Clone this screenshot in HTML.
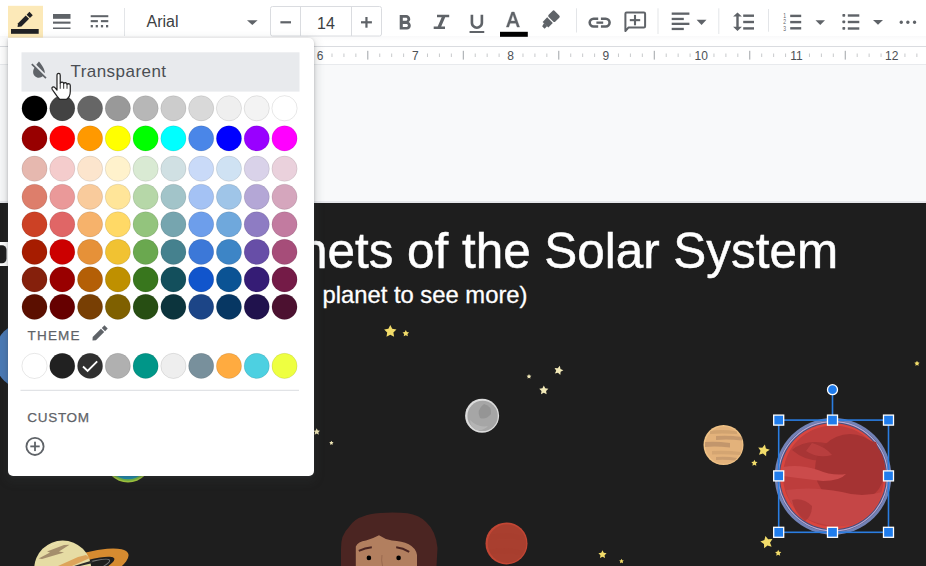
<!DOCTYPE html>
<html><head><meta charset="utf-8">
<style>
*{margin:0;padding:0;box-sizing:border-box}
html,body{width:926px;height:566px;overflow:hidden;background:#f8f9fa;font-family:"Liberation Sans",sans-serif}
.abs{position:absolute}
#toolbar{position:absolute;left:0;top:0;width:926px;height:46px;background:#fff}
#ruler{position:absolute;left:0;top:46px;width:926px;height:19px;background:#fff;border-top:1px solid #dadce0;border-bottom:1px solid #e8eaed}
.rn{position:absolute;top:3px;width:40px;text-align:center;font-size:12px;color:#4d5156;line-height:14px}
#slide{position:absolute;left:0;top:203px;width:926px;height:363px;background:#1e1e1e}
.title{position:absolute;left:228.6px;top:223px;font-size:49.4px;color:#fff;-webkit-text-stroke:0.5px #fff;white-space:nowrap;line-height:56px}
.sub{position:absolute;font-size:23.8px;color:#fff;-webkit-text-stroke:0.3px #fff;white-space:nowrap;line-height:26px}
#dd{position:absolute;left:7.5px;top:38px;width:306.5px;height:437.8px;background:#fff;border-radius:0 5px 5px 5px;box-shadow:0 1px 3px rgba(60,64,67,.3),0 4px 8px 3px rgba(60,64,67,.15)}
.lbl{position:absolute;font-size:13.5px;font-weight:normal;color:#5f6368;letter-spacing:1.2px;-webkit-text-stroke:0.25px #5f6368}
</style></head><body>

<!-- toolbar -->
<div id="toolbar"></div>
<div class="abs" style="left:0;top:36px;width:926px;height:5px;background:linear-gradient(#f9f9fa,#fff)"></div>
<svg class="abs" style="left:0;top:0" width="926" height="46" viewBox="0 0 926 46">
  <rect x="8" y="5.8" width="35" height="31.8" fill="#fce9b8"/>
  <!-- pencil -->
  <g transform="translate(17.6 27) rotate(-45)">
    <path d="M0 0 L3 -2.35 L13.9 -2.35 L13.9 2.35 L3 2.35 Z" fill="#202124"/>
    <rect x="15.1" y="-2.35" width="4" height="4.7" fill="#202124"/>
  </g>
  <rect x="11" y="29" width="27.7" height="4.8" fill="#202124"/>
  <!-- border weight -->
  <rect x="53" y="14" width="17.5" height="4.8" fill="#5f6368"/>
  <rect x="53" y="21.6" width="17.5" height="2.1" fill="#5f6368"/>
  <rect x="53" y="27.5" width="17.5" height="1.5" fill="#5f6368"/>
  <!-- border dash -->
  <rect x="90.7" y="15.2" width="17.6" height="2" fill="#5f6368"/>
  <rect x="90.7" y="20.1" width="7.2" height="2.1" fill="#5f6368"/>
  <rect x="100.9" y="20.1" width="7.4" height="2.1" fill="#5f6368"/>
  <rect x="90.7" y="25" width="2.2" height="2.4" fill="#5f6368"/>
  <rect x="95.7" y="25" width="2.2" height="2.4" fill="#5f6368"/>
  <rect x="100.9" y="25" width="2.2" height="2.4" fill="#5f6368"/>
  <rect x="106" y="25" width="2.2" height="2.4" fill="#5f6368"/>
  <!-- separators -->
  <rect x="124" y="8" width="1" height="28" fill="#e3e5e8"/>
  <!-- font dropdown arrow -->
  <path d="M247 20.3 L257.6 20.3 L252.3 25 Z" fill="#5f6368"/>
  <!-- font size box -->
  <rect x="270.5" y="6.5" width="111" height="29.5" rx="2" fill="none" stroke="#dadce0"/>
  <rect x="300" y="7" width="1" height="29" fill="#dadce0"/>
  <rect x="351" y="7" width="1" height="29" fill="#dadce0"/>
  <rect x="280.4" y="21.2" width="10.6" height="2.2" fill="#5f6368"/>
  <rect x="361" y="21.2" width="10.9" height="2.2" fill="#5f6368"/>
  <rect x="365.35" y="17" width="2.2" height="10.7" fill="#5f6368"/>
  <!-- B I U -->
  <path transform="translate(392.5 11) scale(1.03)" fill="#5f6368" d="M15.6 10.79c.97-.67 1.65-1.77 1.65-2.79 0-2.26-1.75-4-4-4H7v14h7.04c2.09 0 3.71-1.7 3.71-3.79 0-1.52-.86-2.82-2.15-3.42zM10 6.5h3c.83 0 1.5.67 1.5 1.5s-.67 1.5-1.5 1.5h-3v-3zm3.5 9H10v-3h3.5c.83 0 1.5.67 1.5 1.5s-.67 1.5-1.5 1.5z"/>
  <path d="M437 14.7 H449.2 V17.2 H445.2 L441.2 26.5 H445 V29 H433.7 V26.5 H437.7 L441.7 17.2 H437 Z" fill="#5f6368"/>
  <path transform="translate(464.3 11.6) scale(1.05 1.02)" fill="#5f6368" d="M12 17c3.31 0 6-2.69 6-6V3h-2.5v8c0 1.93-1.57 3.5-3.5 3.5S8.5 12.93 8.5 11V3H6v8c0 3.31 2.69 6 6 6zm-7 2v2h14v-2H5z"/>
  <!-- text color A -->
  <path transform="translate(500.7 8.76) scale(1.02 1.08)" fill="#5f6368" stroke="#5f6368" stroke-width="0.35" d="M5.49 17h2.42l1.27-3.58h5.65L16.09 17h2.42L13.25 3h-2.5L5.49 17zm4.42-5.61l2.03-5.79h.12l2.03 5.79H9.91z"/>
  <rect x="500" y="31.8" width="27.8" height="5" fill="#000"/>
  <!-- highlighter -->
  <g transform="translate(543 27.2) rotate(-45)" fill="#5f6368">
    <path d="M0 -1.2 L3.8 -2.2 L3.8 2.2 L0 2.2 Z"/>
    <rect x="3.5" y="-4" width="6.4" height="8"/>
    <rect x="11.2" y="-4.8" width="8.6" height="9.6" rx="1.6"/>
  </g>
  <rect x="576" y="8.3" width="1" height="24.2" fill="#e3e5e8"/>
  <!-- link -->
  <g fill="none" stroke="#5f6368" stroke-width="2.6">
    <path d="M598.2 18.7 H593.6 A3.9 3.9 0 0 0 593.6 26.5 H598.2"/>
    <path d="M600.9 18.7 H605.7 A3.9 3.9 0 0 1 605.7 26.5 H600.9"/>
  </g>
  <rect x="596.4" y="21.5" width="6.8" height="2.3" fill="#5f6368"/>
  <!-- comment -->
  <path d="M625.4 31 V13.8 Q625.4 12.6 626.6 12.6 H643.9 Q645.1 12.6 645.1 13.8 V26.2 Q645.1 27.4 643.9 27.4 H628.6 Z" fill="none" stroke="#5f6368" stroke-width="2" stroke-linejoin="round"/>
  <rect x="629.8" y="19.1" width="10.4" height="2.1" fill="#5f6368"/>
  <rect x="633.95" y="14.9" width="2.1" height="10.4" fill="#5f6368"/>
  <rect x="657.5" y="8.3" width="1" height="25.7" fill="#e3e5e8"/>
  <!-- align -->
  <rect x="671.7" y="12.5" width="17.7" height="2.3" fill="#5f6368"/>
  <rect x="671.7" y="17.8" width="12.1" height="2.3" fill="#5f6368"/>
  <rect x="671.7" y="22.7" width="17.7" height="2.3" fill="#5f6368"/>
  <rect x="671.7" y="27.8" width="12.1" height="2.3" fill="#5f6368"/>
  <path d="M696.6 19.7 L706.5 19.7 L701.55 25 Z" fill="#5f6368"/>
  <rect x="718.3" y="8.3" width="1" height="25.7" fill="#e3e5e8"/>
  <!-- line spacing -->
  <path d="M737.5 12.4 L741.9 16.6 H738.7 V26.8 H741.9 L737.5 31 L733.1 26.8 H736.3 V16.6 H733.1 Z" fill="#5f6368"/>
  <rect x="743.2" y="14.5" width="10.8" height="2.4" fill="#5f6368"/>
  <rect x="743.2" y="20.8" width="10.8" height="2.4" fill="#5f6368"/>
  <rect x="743.2" y="27.2" width="10.8" height="2.4" fill="#5f6368"/>
  <rect x="768" y="9" width="1" height="22.7" fill="#e3e5e8"/>
  <!-- numbered list -->
  <g transform="translate(783.2 0) scale(0.72 1)" font-family="Liberation Sans" font-size="7" fill="#5f6368">
    <text x="0" y="18.2">1</text>
    <text x="0" y="24.4">2</text>
    <text x="0" y="30.6">3</text>
  </g>
  <rect x="790.2" y="14.7" width="11" height="2.4" fill="#5f6368"/>
  <rect x="790.2" y="20.9" width="11" height="2.4" fill="#5f6368"/>
  <rect x="790.2" y="27.1" width="11" height="2.4" fill="#5f6368"/>
  <path d="M815.5 20.2 L825 20.2 L820.25 25 Z" fill="#5f6368"/>
  <!-- bulleted list -->
  <rect x="842.4" y="14" width="2.8" height="2.8" rx="0.7" fill="#5f6368"/>
  <rect x="842.4" y="20.5" width="2.8" height="2.8" rx="0.7" fill="#5f6368"/>
  <rect x="842.4" y="27" width="2.8" height="2.8" rx="0.7" fill="#5f6368"/>
  <rect x="847.8" y="14.3" width="11.5" height="2.4" fill="#5f6368"/>
  <rect x="847.8" y="20.8" width="11.5" height="2.4" fill="#5f6368"/>
  <rect x="847.8" y="27.3" width="11.5" height="2.4" fill="#5f6368"/>
  <path d="M873 20 L883 20 L878 24.8 Z" fill="#5f6368"/>
  <!-- more -->
  <rect x="899.6" y="20.5" width="3.3" height="3.4" rx="1.6" fill="#5f6368"/>
  <rect x="906.2" y="20.5" width="3.3" height="3.4" rx="1.6" fill="#5f6368"/>
  <rect x="912.9" y="20.5" width="3.3" height="3.4" rx="1.6" fill="#5f6368"/>
</svg>
<div class="abs" style="left:146.5px;top:12.5px;font-size:16px;color:#3c4043;line-height:18px">Arial</div>
<div class="abs" style="left:301px;top:15px;width:50px;text-align:center;font-size:16px;color:#3c4043;line-height:18px">14</div>

<!-- ruler -->
<div id="ruler"></div>
<svg class="abs" style="left:0;top:0" width="926" height="70">
<rect x="-241.45" y="53.5" width="1" height="3.5" fill="#c8cacc"/>
<rect x="-229.51" y="53.5" width="1" height="3.5" fill="#c8cacc"/>
<rect x="-217.58" y="53.5" width="1" height="3.5" fill="#c8cacc"/>
<rect x="-205.64" y="50.8" width="1" height="8.8" fill="#a0a4a8"/>
<rect x="-193.70" y="53.5" width="1" height="3.5" fill="#c8cacc"/>
<rect x="-181.77" y="53.5" width="1" height="3.5" fill="#c8cacc"/>
<rect x="-169.83" y="53.5" width="1" height="3.5" fill="#c8cacc"/>
<rect x="-145.96" y="53.5" width="1" height="3.5" fill="#c8cacc"/>
<rect x="-134.02" y="53.5" width="1" height="3.5" fill="#c8cacc"/>
<rect x="-122.09" y="53.5" width="1" height="3.5" fill="#c8cacc"/>
<rect x="-110.15" y="50.8" width="1" height="8.8" fill="#a0a4a8"/>
<rect x="-98.21" y="53.5" width="1" height="3.5" fill="#c8cacc"/>
<rect x="-86.28" y="53.5" width="1" height="3.5" fill="#c8cacc"/>
<rect x="-74.34" y="53.5" width="1" height="3.5" fill="#c8cacc"/>
<rect x="-50.47" y="53.5" width="1" height="3.5" fill="#c8cacc"/>
<rect x="-38.53" y="53.5" width="1" height="3.5" fill="#c8cacc"/>
<rect x="-26.60" y="53.5" width="1" height="3.5" fill="#c8cacc"/>
<rect x="-14.66" y="50.8" width="1" height="8.8" fill="#a0a4a8"/>
<rect x="-2.72" y="53.5" width="1" height="3.5" fill="#c8cacc"/>
<rect x="9.21" y="53.5" width="1" height="3.5" fill="#c8cacc"/>
<rect x="21.15" y="53.5" width="1" height="3.5" fill="#c8cacc"/>
<rect x="45.02" y="53.5" width="1" height="3.5" fill="#c8cacc"/>
<rect x="56.96" y="53.5" width="1" height="3.5" fill="#c8cacc"/>
<rect x="68.89" y="53.5" width="1" height="3.5" fill="#c8cacc"/>
<rect x="80.83" y="50.8" width="1" height="8.8" fill="#a0a4a8"/>
<rect x="92.77" y="53.5" width="1" height="3.5" fill="#c8cacc"/>
<rect x="104.70" y="53.5" width="1" height="3.5" fill="#c8cacc"/>
<rect x="116.64" y="53.5" width="1" height="3.5" fill="#c8cacc"/>
<rect x="140.51" y="53.5" width="1" height="3.5" fill="#c8cacc"/>
<rect x="152.45" y="53.5" width="1" height="3.5" fill="#c8cacc"/>
<rect x="164.38" y="53.5" width="1" height="3.5" fill="#c8cacc"/>
<rect x="176.32" y="50.8" width="1" height="8.8" fill="#a0a4a8"/>
<rect x="188.26" y="53.5" width="1" height="3.5" fill="#c8cacc"/>
<rect x="200.19" y="53.5" width="1" height="3.5" fill="#c8cacc"/>
<rect x="212.13" y="53.5" width="1" height="3.5" fill="#c8cacc"/>
<rect x="236.00" y="53.5" width="1" height="3.5" fill="#c8cacc"/>
<rect x="247.94" y="53.5" width="1" height="3.5" fill="#c8cacc"/>
<rect x="259.87" y="53.5" width="1" height="3.5" fill="#c8cacc"/>
<rect x="271.81" y="50.8" width="1" height="8.8" fill="#a0a4a8"/>
<rect x="283.75" y="53.5" width="1" height="3.5" fill="#c8cacc"/>
<rect x="295.68" y="53.5" width="1" height="3.5" fill="#c8cacc"/>
<rect x="307.62" y="53.5" width="1" height="3.5" fill="#c8cacc"/>
<rect x="331.49" y="53.5" width="1" height="3.5" fill="#c8cacc"/>
<rect x="343.43" y="53.5" width="1" height="3.5" fill="#c8cacc"/>
<rect x="355.36" y="53.5" width="1" height="3.5" fill="#c8cacc"/>
<rect x="367.30" y="50.8" width="1" height="8.8" fill="#a0a4a8"/>
<rect x="379.24" y="53.5" width="1" height="3.5" fill="#c8cacc"/>
<rect x="391.17" y="53.5" width="1" height="3.5" fill="#c8cacc"/>
<rect x="403.11" y="53.5" width="1" height="3.5" fill="#c8cacc"/>
<rect x="426.98" y="53.5" width="1" height="3.5" fill="#c8cacc"/>
<rect x="438.92" y="53.5" width="1" height="3.5" fill="#c8cacc"/>
<rect x="450.85" y="53.5" width="1" height="3.5" fill="#c8cacc"/>
<rect x="462.79" y="50.8" width="1" height="8.8" fill="#a0a4a8"/>
<rect x="474.73" y="53.5" width="1" height="3.5" fill="#c8cacc"/>
<rect x="486.66" y="53.5" width="1" height="3.5" fill="#c8cacc"/>
<rect x="498.60" y="53.5" width="1" height="3.5" fill="#c8cacc"/>
<rect x="522.47" y="53.5" width="1" height="3.5" fill="#c8cacc"/>
<rect x="534.41" y="53.5" width="1" height="3.5" fill="#c8cacc"/>
<rect x="546.34" y="53.5" width="1" height="3.5" fill="#c8cacc"/>
<rect x="558.28" y="50.8" width="1" height="8.8" fill="#a0a4a8"/>
<rect x="570.22" y="53.5" width="1" height="3.5" fill="#c8cacc"/>
<rect x="582.15" y="53.5" width="1" height="3.5" fill="#c8cacc"/>
<rect x="594.09" y="53.5" width="1" height="3.5" fill="#c8cacc"/>
<rect x="617.96" y="53.5" width="1" height="3.5" fill="#c8cacc"/>
<rect x="629.90" y="53.5" width="1" height="3.5" fill="#c8cacc"/>
<rect x="641.83" y="53.5" width="1" height="3.5" fill="#c8cacc"/>
<rect x="653.77" y="50.8" width="1" height="8.8" fill="#a0a4a8"/>
<rect x="665.71" y="53.5" width="1" height="3.5" fill="#c8cacc"/>
<rect x="677.64" y="53.5" width="1" height="3.5" fill="#c8cacc"/>
<rect x="689.58" y="53.5" width="1" height="3.5" fill="#c8cacc"/>
<rect x="713.45" y="53.5" width="1" height="3.5" fill="#c8cacc"/>
<rect x="725.39" y="53.5" width="1" height="3.5" fill="#c8cacc"/>
<rect x="737.32" y="53.5" width="1" height="3.5" fill="#c8cacc"/>
<rect x="749.26" y="50.8" width="1" height="8.8" fill="#a0a4a8"/>
<rect x="761.20" y="53.5" width="1" height="3.5" fill="#c8cacc"/>
<rect x="773.13" y="53.5" width="1" height="3.5" fill="#c8cacc"/>
<rect x="785.07" y="53.5" width="1" height="3.5" fill="#c8cacc"/>
<rect x="808.94" y="53.5" width="1" height="3.5" fill="#c8cacc"/>
<rect x="820.88" y="53.5" width="1" height="3.5" fill="#c8cacc"/>
<rect x="832.81" y="53.5" width="1" height="3.5" fill="#c8cacc"/>
<rect x="844.75" y="50.8" width="1" height="8.8" fill="#a0a4a8"/>
<rect x="856.69" y="53.5" width="1" height="3.5" fill="#c8cacc"/>
<rect x="868.62" y="53.5" width="1" height="3.5" fill="#c8cacc"/>
<rect x="880.56" y="53.5" width="1" height="3.5" fill="#c8cacc"/>
<rect x="904.43" y="53.5" width="1" height="3.5" fill="#c8cacc"/>
<rect x="916.37" y="53.5" width="1" height="3.5" fill="#c8cacc"/>
<rect x="928.30" y="53.5" width="1" height="3.5" fill="#c8cacc"/>
<rect x="940.24" y="50.8" width="1" height="8.8" fill="#a0a4a8"/>
<rect x="952.18" y="53.5" width="1" height="3.5" fill="#c8cacc"/>
<rect x="964.11" y="53.5" width="1" height="3.5" fill="#c8cacc"/>
<rect x="976.05" y="53.5" width="1" height="3.5" fill="#c8cacc"/>
<rect x="999.92" y="53.5" width="1" height="3.5" fill="#c8cacc"/>
<rect x="1011.86" y="53.5" width="1" height="3.5" fill="#c8cacc"/>
<rect x="1023.79" y="53.5" width="1" height="3.5" fill="#c8cacc"/>
<rect x="1035.73" y="50.8" width="1" height="8.8" fill="#a0a4a8"/>
<rect x="1047.67" y="53.5" width="1" height="3.5" fill="#c8cacc"/>
<rect x="1059.60" y="53.5" width="1" height="3.5" fill="#c8cacc"/>
<rect x="1071.54" y="53.5" width="1" height="3.5" fill="#c8cacc"/>
</svg>
<div class="abs" style="left:0;top:46px;width:926px;height:18px">
<div class="rn" style="left:300.0px">6</div>
<div class="rn" style="left:395.3px">7</div>
<div class="rn" style="left:490.6px">8</div>
<div class="rn" style="left:585.9px">9</div>
<div class="rn" style="left:681.2px">10</div>
<div class="rn" style="left:776.5px">11</div>
<div class="rn" style="left:871.8px">12</div>
</div>

<!-- slide -->
<div class="abs" style="left:0;top:201px;width:926px;height:2px;background:#e6e7eb"></div>
<div id="slide"></div>
<div class="title">Planets of the Solar System</div>
<div class="sub" style="left:236.5px;top:281.6px"><span style="color:transparent;-webkit-text-stroke:0">(Click a </span>planet to see more)</div>

<svg class="abs" style="left:0;top:203px" width="926" height="363" viewBox="0 203 926 363">
  <!-- white arc on left -->
  <rect x="-6" y="242" width="14" height="24" fill="#fff"/>
  <rect x="-8" y="245.3" width="14.5" height="18" rx="4.5" fill="#1e1e1e"/>
  <!-- blue planet left -->
  <circle cx="28.9" cy="356" r="35" fill="#4a7ab6"/>
  <!-- earth partial -->
  <circle cx="128" cy="458.7" r="23.8" fill="#a6cc3c"/>
  <circle cx="128" cy="458.7" r="22.3" fill="#74b844"/>
  <circle cx="128" cy="458.7" r="20.6" fill="#1d8fb5"/>
  <circle cx="128" cy="457" r="17.5" fill="#26a0c4"/>
  <!-- saturn -->
  <g>
    <ellipse cx="70" cy="575" rx="62" ry="17" transform="rotate(-20 70 575)" fill="#d68b30"/>
    <ellipse cx="72" cy="574" rx="45" ry="8.5" transform="rotate(-20 72 574)" fill="#1e1e1e"/>
    <ellipse cx="72" cy="574" rx="40" ry="6" transform="rotate(-20 72 574)" fill="none" stroke="#777" stroke-width="1"/>
    <circle cx="62.7" cy="569" r="28.5" fill="#e6dca4"/>
    <path d="M42 552 Q52 543 62.7 541 Q48 546 42 552 Z" fill="#f2ecc6"/>
    <path d="M38.7 558.5 L50 552.5 L47 551.5 L64 545 L69.5 544.8 L59 551.5 L64 552.5 L42 559 Z" fill="#a48e6c"/>
    <path d="M58 566 L78 557 L86 555 L90 558 L72 566 Z" fill="#dda45a"/>
    <path d="M74 566 L92 560.5 L93 563 L80 566 Z" fill="#2a2a2a"/>
  </g>
  <!-- stars -->
  <g fill="#f2dc6a">
    <path d="M0 -1 L0.294 -0.405 L0.951 -0.309 L0.476 0.155 L0.588 0.809 L0 0.5 L-0.588 0.809 L-0.476 0.155 L-0.951 -0.309 L-0.294 -0.405 Z" transform="translate(390.3 331.5) scale(6.5)"/>
    <path d="M0 -1 L0.294 -0.405 L0.951 -0.309 L0.476 0.155 L0.588 0.809 L0 0.5 L-0.588 0.809 L-0.476 0.155 L-0.951 -0.309 L-0.294 -0.405 Z" transform="translate(405.8 333.5) scale(3.5)"/>
    <path d="M0 -1 L0.294 -0.405 L0.951 -0.309 L0.476 0.155 L0.588 0.809 L0 0.5 L-0.588 0.809 L-0.476 0.155 L-0.951 -0.309 L-0.294 -0.405 Z" transform="translate(558.6 370.5) rotate(15) scale(4.8)" fill="#f2e9b8"/>
    <path d="M0 -1 L0.294 -0.405 L0.951 -0.309 L0.476 0.155 L0.588 0.809 L0 0.5 L-0.588 0.809 L-0.476 0.155 L-0.951 -0.309 L-0.294 -0.405 Z" transform="translate(529 376.5) scale(2.5)" fill="#f2e9b8"/>
    <path d="M0 -1 L0.294 -0.405 L0.951 -0.309 L0.476 0.155 L0.588 0.809 L0 0.5 L-0.588 0.809 L-0.476 0.155 L-0.951 -0.309 L-0.294 -0.405 Z" transform="translate(543.8 390.3) scale(4.8)" fill="#f2e9b8"/>
    <path d="M0 -1 L0.294 -0.405 L0.951 -0.309 L0.476 0.155 L0.588 0.809 L0 0.5 L-0.588 0.809 L-0.476 0.155 L-0.951 -0.309 L-0.294 -0.405 Z" transform="translate(316.7 431.8) scale(3.5)" fill="#f2e9b8"/>
    <path d="M0 -1 L0.294 -0.405 L0.951 -0.309 L0.476 0.155 L0.588 0.809 L0 0.5 L-0.588 0.809 L-0.476 0.155 L-0.951 -0.309 L-0.294 -0.405 Z" transform="translate(331.4 443) scale(2.3)" fill="#f2e9b8"/>
    <path d="M0 -1 L0.294 -0.405 L0.951 -0.309 L0.476 0.155 L0.588 0.809 L0 0.5 L-0.588 0.809 L-0.476 0.155 L-0.951 -0.309 L-0.294 -0.405 Z" transform="translate(917 363.5) scale(2.8)"/>
    <path d="M0 -1 L0.294 -0.405 L0.951 -0.309 L0.476 0.155 L0.588 0.809 L0 0.5 L-0.588 0.809 L-0.476 0.155 L-0.951 -0.309 L-0.294 -0.405 Z" transform="translate(763.6 450.5) rotate(12) scale(6.2)"/>
    <path d="M0 -1 L0.294 -0.405 L0.951 -0.309 L0.476 0.155 L0.588 0.809 L0 0.5 L-0.588 0.809 L-0.476 0.155 L-0.951 -0.309 L-0.294 -0.405 Z" transform="translate(754.4 463) scale(3.3)"/>
    <path d="M0 -1 L0.294 -0.405 L0.951 -0.309 L0.476 0.155 L0.588 0.809 L0 0.5 L-0.588 0.809 L-0.476 0.155 L-0.951 -0.309 L-0.294 -0.405 Z" transform="translate(766.8 542.3) rotate(-12) scale(6.5)"/>
    <path d="M0 -1 L0.294 -0.405 L0.951 -0.309 L0.476 0.155 L0.588 0.809 L0 0.5 L-0.588 0.809 L-0.476 0.155 L-0.951 -0.309 L-0.294 -0.405 Z" transform="translate(778.2 553) scale(3.3)"/>
    <path d="M0 -1 L0.294 -0.405 L0.951 -0.309 L0.476 0.155 L0.588 0.809 L0 0.5 L-0.588 0.809 L-0.476 0.155 L-0.951 -0.309 L-0.294 -0.405 Z" transform="translate(602.5 554.5) scale(4.3)"/>
    <path d="M0 -1 L0.294 -0.405 L0.951 -0.309 L0.476 0.155 L0.588 0.809 L0 0.5 L-0.588 0.809 L-0.476 0.155 L-0.951 -0.309 L-0.294 -0.405 Z" transform="translate(621.5 561.2) scale(2.5)"/>
  </g>
  <!-- moon -->
  <circle cx="482.1" cy="415.7" r="17" fill="#dcdcdc"/>
  <circle cx="482.6" cy="415.9" r="15.2" fill="#a6a6a6"/>
  <path d="M484 404 Q492 406 491 414 Q486 420 480 418 Q476 410 484 404 Z" fill="#959595"/>
  <path d="M470 420 Q478 428 488 426 Q484 431 476 430 Q470 426 470 420 Z" fill="#b4b4b4"/>
  <!-- mars small -->
  <circle cx="506.5" cy="543.4" r="21" fill="#c24634"/>
  <circle cx="507" cy="543.6" r="19.3" fill="#a93f2f"/>
  <path d="M490 535 Q505 531 524 536 L523 540 Q505 537 490 540 Z" fill="#a83d2e" opacity="0.6"/>
  <path d="M489 550 Q505 546 523 551 L521 555 Q505 552 491 554 Z" fill="#a83d2e" opacity="0.6"/>
  <!-- venus -->
  <circle cx="723.5" cy="445" r="20" fill="#efc286"/>
  <circle cx="723.8" cy="445.2" r="18.6" fill="#e3b27b"/>
  <path d="M710 431 Q722 429 737 431.5 L737 434 Q722 433 710 434 Z" fill="#c99c6c" opacity="0.7"/>
  <path d="M716 436 Q728 435 742 437 L742 440.5 Q728 439 716 440 Z" fill="#b98f68" opacity="0.7"/>
  <path d="M705 442 Q716 441 730 443 L730 447.5 Q716 446 705 447 Z" fill="#b48a66" opacity="0.7"/>
  <path d="M712 451 Q726 450 741 452 L740 455 Q726 454 712 454.5 Z" fill="#c99c6c" opacity="0.6"/>
  <path d="M716 457 Q727 456 737 458 L735 460.5 Q726 459.5 716 460 Z" fill="#b98f68" opacity="0.6"/>
  <!-- face -->
  <path d="M341 566 L341 549 Q340.5 535 349 527 Q354 519 363 516.5 Q369 513.5 380 513 Q395 512 407.5 513.3 Q419 515 426 522 Q436 531 437.5 548 L436.5 566 Z" fill="#4b2522"/>
  <path d="M355.8 566 V546.5 Q358 541.5 366 540.6 Q373 538.5 379 535.3 Q385 539.5 392 540.6 Q402 541.5 408.7 544.2 Q416 548 417 555 V566 Z" fill="#b27f5f"/>
  <path d="M358.8 550.9 Q365 548 371.8 547.3" fill="none" stroke="#4b2522" stroke-width="2"/>
  <path d="M396.2 547.3 Q403 548 409.2 551.9" fill="none" stroke="#4b2522" stroke-width="2"/>
  <path d="M382 555 Q381 560 382.5 566" fill="none" stroke="#93634a" stroke-width="0.8"/>
  <circle cx="368.9" cy="557.9" r="2.3" fill="#000"/>
  <circle cx="398.6" cy="557.9" r="2.3" fill="#000"/>
  <!-- selected mars -->
  <circle cx="833" cy="476.3" r="58.3" fill="#7282b6"/>
  <circle cx="833" cy="476.3" r="55.6" fill="#46507e"/>
  <circle cx="833" cy="476.3" r="54.6" fill="none" stroke="#b7a9d3" stroke-width="1.2"/>
  <circle cx="833" cy="476.3" r="53" fill="#d9463f"/>
  <circle cx="833.5" cy="476" r="50.5" fill="#bd3d3c"/>
  <path d="M792 450 Q806 438 830 444 Q852 436 876 442 L881 458 Q852 456 832 460 Q808 464 792 450 Z" fill="#a83535"/>
  <circle cx="850" cy="469" r="35" fill="#a53333"/>
  <path d="M783 467 Q800 464 818 470 Q832 476 846 474 Q840 481 823 481 Q805 479 783 476 Z" fill="#cb4b4b"/>
  <path d="M786 490 Q812 486 842 492 Q862 498 882 492 Q877 514 852 525 Q822 529 802 516 Q790 506 786 490 Z" fill="#c54646"/>
  <path d="M792 500 Q803 497 812 506 Q812 516 805 521 Q794 512 792 500 Z" fill="#a83535" opacity="0.75"/>
  <path d="M812 443 Q826 447 832 455 Q818 459 806 451 Z" fill="#c04343" opacity="0.7"/>
  <!-- selection -->
  <g fill="none" stroke="#2a7de1" stroke-width="1.6">
    <rect x="778.7" y="420.1" width="109.8" height="112.2"/>
    <line x1="832.5" y1="395" x2="832.5" y2="420"/>
  </g>
  <g fill="#1f7cec" stroke="#fff" stroke-width="1.3">
    <circle cx="832.5" cy="389.7" r="5"/>
    <rect x="773.7" y="415.1" width="10" height="10"/>
    <rect x="827.5" y="415.1" width="10" height="10"/>
    <rect x="883.5" y="415.1" width="10" height="10"/>
    <rect x="773.7" y="470.9" width="10" height="10"/>
    <rect x="883.5" y="470.9" width="10" height="10"/>
    <rect x="773.7" y="527.3" width="10" height="10"/>
    <rect x="827.5" y="527.3" width="10" height="10"/>
    <rect x="883.5" y="527.3" width="10" height="10"/>
  </g>
</svg>

<!-- dropdown -->
<div id="dd"></div>
<svg class="abs" style="left:0;top:0" width="320" height="480" viewBox="0 0 320 480">
  <rect x="21.5" y="52.3" width="278" height="39.3" fill="#e8eaed"/>
  <!-- format_color_reset icon -->
  <g transform="translate(27.3 58.3) scale(0.97)" fill="#5f6368">
    <path d="M18 14c0-4-6-10.8-6-10.8s-1.33 1.51-2.73 3.52l8.59 8.59c.09-.42.14-.86.14-1.31zm-.88 3.12L12.5 12.5 5.27 5.27 4 6.55l3.32 3.32C6.55 11.32 6 12.79 6 14c0 3.31 2.69 6 6 6 1.52 0 2.9-.57 3.96-1.5l2.63 2.63 1.27-1.27-2.74-2.74z"/>
  </g>
  <text x="70.5" y="77.4" font-family="Liberation Sans" font-size="17" letter-spacing="0.45" fill="#4a4e53">Transparent</text>
  <circle cx="34.50" cy="108.30" r="12.6" fill="#000000" stroke="rgba(0,0,0,0.12)" stroke-width="0.8"/>
<circle cx="62.28" cy="108.30" r="12.6" fill="#434343" stroke="rgba(0,0,0,0.12)" stroke-width="0.8"/>
<circle cx="90.06" cy="108.30" r="12.6" fill="#666666" stroke="rgba(0,0,0,0.12)" stroke-width="0.8"/>
<circle cx="117.84" cy="108.30" r="12.6" fill="#999999" stroke="rgba(0,0,0,0.12)" stroke-width="0.8"/>
<circle cx="145.62" cy="108.30" r="12.6" fill="#b7b7b7" stroke="rgba(0,0,0,0.12)" stroke-width="0.8"/>
<circle cx="173.40" cy="108.30" r="12.6" fill="#cccccc" stroke="rgba(0,0,0,0.12)" stroke-width="0.8"/>
<circle cx="201.18" cy="108.30" r="12.6" fill="#d9d9d9" stroke="rgba(0,0,0,0.12)" stroke-width="0.8"/>
<circle cx="228.96" cy="108.30" r="12.6" fill="#efefef" stroke="rgba(0,0,0,0.12)" stroke-width="0.8"/>
<circle cx="256.74" cy="108.30" r="12.6" fill="#f3f3f3" stroke="rgba(0,0,0,0.12)" stroke-width="0.8"/>
<circle cx="284.52" cy="108.30" r="12.6" fill="#ffffff" stroke="rgba(0,0,0,0.12)" stroke-width="0.8"/>
<circle cx="34.50" cy="138.40" r="12.6" fill="#980000" stroke="rgba(0,0,0,0.12)" stroke-width="0.8"/>
<circle cx="62.28" cy="138.40" r="12.6" fill="#ff0000" stroke="rgba(0,0,0,0.12)" stroke-width="0.8"/>
<circle cx="90.06" cy="138.40" r="12.6" fill="#ff9900" stroke="rgba(0,0,0,0.12)" stroke-width="0.8"/>
<circle cx="117.84" cy="138.40" r="12.6" fill="#ffff00" stroke="rgba(0,0,0,0.12)" stroke-width="0.8"/>
<circle cx="145.62" cy="138.40" r="12.6" fill="#00ff00" stroke="rgba(0,0,0,0.12)" stroke-width="0.8"/>
<circle cx="173.40" cy="138.40" r="12.6" fill="#00ffff" stroke="rgba(0,0,0,0.12)" stroke-width="0.8"/>
<circle cx="201.18" cy="138.40" r="12.6" fill="#4a86e8" stroke="rgba(0,0,0,0.12)" stroke-width="0.8"/>
<circle cx="228.96" cy="138.40" r="12.6" fill="#0000ff" stroke="rgba(0,0,0,0.12)" stroke-width="0.8"/>
<circle cx="256.74" cy="138.40" r="12.6" fill="#9900ff" stroke="rgba(0,0,0,0.12)" stroke-width="0.8"/>
<circle cx="284.52" cy="138.40" r="12.6" fill="#ff00ff" stroke="rgba(0,0,0,0.12)" stroke-width="0.8"/>
<circle cx="34.50" cy="168.70" r="12.6" fill="#e6b8af" stroke="rgba(0,0,0,0.12)" stroke-width="0.8"/>
<circle cx="62.28" cy="168.70" r="12.6" fill="#f4cccc" stroke="rgba(0,0,0,0.12)" stroke-width="0.8"/>
<circle cx="90.06" cy="168.70" r="12.6" fill="#fce5cd" stroke="rgba(0,0,0,0.12)" stroke-width="0.8"/>
<circle cx="117.84" cy="168.70" r="12.6" fill="#fff2cc" stroke="rgba(0,0,0,0.12)" stroke-width="0.8"/>
<circle cx="145.62" cy="168.70" r="12.6" fill="#d9ead3" stroke="rgba(0,0,0,0.12)" stroke-width="0.8"/>
<circle cx="173.40" cy="168.70" r="12.6" fill="#d0e0e3" stroke="rgba(0,0,0,0.12)" stroke-width="0.8"/>
<circle cx="201.18" cy="168.70" r="12.6" fill="#c9daf8" stroke="rgba(0,0,0,0.12)" stroke-width="0.8"/>
<circle cx="228.96" cy="168.70" r="12.6" fill="#cfe2f3" stroke="rgba(0,0,0,0.12)" stroke-width="0.8"/>
<circle cx="256.74" cy="168.70" r="12.6" fill="#d9d2e9" stroke="rgba(0,0,0,0.12)" stroke-width="0.8"/>
<circle cx="284.52" cy="168.70" r="12.6" fill="#ead1dc" stroke="rgba(0,0,0,0.12)" stroke-width="0.8"/>
<circle cx="34.50" cy="196.80" r="12.6" fill="#dd7e6b" stroke="rgba(0,0,0,0.12)" stroke-width="0.8"/>
<circle cx="62.28" cy="196.80" r="12.6" fill="#ea9999" stroke="rgba(0,0,0,0.12)" stroke-width="0.8"/>
<circle cx="90.06" cy="196.80" r="12.6" fill="#f9cb9c" stroke="rgba(0,0,0,0.12)" stroke-width="0.8"/>
<circle cx="117.84" cy="196.80" r="12.6" fill="#ffe599" stroke="rgba(0,0,0,0.12)" stroke-width="0.8"/>
<circle cx="145.62" cy="196.80" r="12.6" fill="#b6d7a8" stroke="rgba(0,0,0,0.12)" stroke-width="0.8"/>
<circle cx="173.40" cy="196.80" r="12.6" fill="#a2c4c9" stroke="rgba(0,0,0,0.12)" stroke-width="0.8"/>
<circle cx="201.18" cy="196.80" r="12.6" fill="#a4c2f4" stroke="rgba(0,0,0,0.12)" stroke-width="0.8"/>
<circle cx="228.96" cy="196.80" r="12.6" fill="#9fc5e8" stroke="rgba(0,0,0,0.12)" stroke-width="0.8"/>
<circle cx="256.74" cy="196.80" r="12.6" fill="#b4a7d6" stroke="rgba(0,0,0,0.12)" stroke-width="0.8"/>
<circle cx="284.52" cy="196.80" r="12.6" fill="#d5a6bd" stroke="rgba(0,0,0,0.12)" stroke-width="0.8"/>
<circle cx="34.50" cy="224.30" r="12.6" fill="#cc4125" stroke="rgba(0,0,0,0.12)" stroke-width="0.8"/>
<circle cx="62.28" cy="224.30" r="12.6" fill="#e06666" stroke="rgba(0,0,0,0.12)" stroke-width="0.8"/>
<circle cx="90.06" cy="224.30" r="12.6" fill="#f6b26b" stroke="rgba(0,0,0,0.12)" stroke-width="0.8"/>
<circle cx="117.84" cy="224.30" r="12.6" fill="#ffd966" stroke="rgba(0,0,0,0.12)" stroke-width="0.8"/>
<circle cx="145.62" cy="224.30" r="12.6" fill="#93c47d" stroke="rgba(0,0,0,0.12)" stroke-width="0.8"/>
<circle cx="173.40" cy="224.30" r="12.6" fill="#76a5af" stroke="rgba(0,0,0,0.12)" stroke-width="0.8"/>
<circle cx="201.18" cy="224.30" r="12.6" fill="#6d9eeb" stroke="rgba(0,0,0,0.12)" stroke-width="0.8"/>
<circle cx="228.96" cy="224.30" r="12.6" fill="#6fa8dc" stroke="rgba(0,0,0,0.12)" stroke-width="0.8"/>
<circle cx="256.74" cy="224.30" r="12.6" fill="#8e7cc3" stroke="rgba(0,0,0,0.12)" stroke-width="0.8"/>
<circle cx="284.52" cy="224.30" r="12.6" fill="#c27ba0" stroke="rgba(0,0,0,0.12)" stroke-width="0.8"/>
<circle cx="34.50" cy="251.90" r="12.6" fill="#a61c00" stroke="rgba(0,0,0,0.12)" stroke-width="0.8"/>
<circle cx="62.28" cy="251.90" r="12.6" fill="#cc0000" stroke="rgba(0,0,0,0.12)" stroke-width="0.8"/>
<circle cx="90.06" cy="251.90" r="12.6" fill="#e69138" stroke="rgba(0,0,0,0.12)" stroke-width="0.8"/>
<circle cx="117.84" cy="251.90" r="12.6" fill="#f1c232" stroke="rgba(0,0,0,0.12)" stroke-width="0.8"/>
<circle cx="145.62" cy="251.90" r="12.6" fill="#6aa84f" stroke="rgba(0,0,0,0.12)" stroke-width="0.8"/>
<circle cx="173.40" cy="251.90" r="12.6" fill="#45818e" stroke="rgba(0,0,0,0.12)" stroke-width="0.8"/>
<circle cx="201.18" cy="251.90" r="12.6" fill="#3c78d8" stroke="rgba(0,0,0,0.12)" stroke-width="0.8"/>
<circle cx="228.96" cy="251.90" r="12.6" fill="#3d85c6" stroke="rgba(0,0,0,0.12)" stroke-width="0.8"/>
<circle cx="256.74" cy="251.90" r="12.6" fill="#674ea7" stroke="rgba(0,0,0,0.12)" stroke-width="0.8"/>
<circle cx="284.52" cy="251.90" r="12.6" fill="#a64d79" stroke="rgba(0,0,0,0.12)" stroke-width="0.8"/>
<circle cx="34.50" cy="279.40" r="12.6" fill="#85200c" stroke="rgba(0,0,0,0.12)" stroke-width="0.8"/>
<circle cx="62.28" cy="279.40" r="12.6" fill="#990000" stroke="rgba(0,0,0,0.12)" stroke-width="0.8"/>
<circle cx="90.06" cy="279.40" r="12.6" fill="#b45f06" stroke="rgba(0,0,0,0.12)" stroke-width="0.8"/>
<circle cx="117.84" cy="279.40" r="12.6" fill="#bf9000" stroke="rgba(0,0,0,0.12)" stroke-width="0.8"/>
<circle cx="145.62" cy="279.40" r="12.6" fill="#38761d" stroke="rgba(0,0,0,0.12)" stroke-width="0.8"/>
<circle cx="173.40" cy="279.40" r="12.6" fill="#134f5c" stroke="rgba(0,0,0,0.12)" stroke-width="0.8"/>
<circle cx="201.18" cy="279.40" r="12.6" fill="#1155cc" stroke="rgba(0,0,0,0.12)" stroke-width="0.8"/>
<circle cx="228.96" cy="279.40" r="12.6" fill="#0b5394" stroke="rgba(0,0,0,0.12)" stroke-width="0.8"/>
<circle cx="256.74" cy="279.40" r="12.6" fill="#351c75" stroke="rgba(0,0,0,0.12)" stroke-width="0.8"/>
<circle cx="284.52" cy="279.40" r="12.6" fill="#741b47" stroke="rgba(0,0,0,0.12)" stroke-width="0.8"/>
<circle cx="34.50" cy="306.80" r="12.6" fill="#5b0f00" stroke="rgba(0,0,0,0.12)" stroke-width="0.8"/>
<circle cx="62.28" cy="306.80" r="12.6" fill="#660000" stroke="rgba(0,0,0,0.12)" stroke-width="0.8"/>
<circle cx="90.06" cy="306.80" r="12.6" fill="#783f04" stroke="rgba(0,0,0,0.12)" stroke-width="0.8"/>
<circle cx="117.84" cy="306.80" r="12.6" fill="#7f6000" stroke="rgba(0,0,0,0.12)" stroke-width="0.8"/>
<circle cx="145.62" cy="306.80" r="12.6" fill="#274e13" stroke="rgba(0,0,0,0.12)" stroke-width="0.8"/>
<circle cx="173.40" cy="306.80" r="12.6" fill="#0c343d" stroke="rgba(0,0,0,0.12)" stroke-width="0.8"/>
<circle cx="201.18" cy="306.80" r="12.6" fill="#1c4587" stroke="rgba(0,0,0,0.12)" stroke-width="0.8"/>
<circle cx="228.96" cy="306.80" r="12.6" fill="#073763" stroke="rgba(0,0,0,0.12)" stroke-width="0.8"/>
<circle cx="256.74" cy="306.80" r="12.6" fill="#20124d" stroke="rgba(0,0,0,0.12)" stroke-width="0.8"/>
<circle cx="284.52" cy="306.80" r="12.6" fill="#4c1130" stroke="rgba(0,0,0,0.12)" stroke-width="0.8"/>
<circle cx="34.50" cy="365.9" r="12.6" fill="#ffffff" stroke="rgba(0,0,0,0.12)" stroke-width="0.8"/>
<circle cx="62.28" cy="365.9" r="12.6" fill="#212121" stroke="rgba(0,0,0,0.12)" stroke-width="0.8"/>
<circle cx="90.06" cy="365.9" r="12.6" fill="#303030" stroke="rgba(0,0,0,0.12)" stroke-width="0.8"/>
<circle cx="117.84" cy="365.9" r="12.6" fill="#b0b0b0" stroke="rgba(0,0,0,0.12)" stroke-width="0.8"/>
<circle cx="145.62" cy="365.9" r="12.6" fill="#009688" stroke="rgba(0,0,0,0.12)" stroke-width="0.8"/>
<circle cx="173.40" cy="365.9" r="12.6" fill="#eeeeee" stroke="rgba(0,0,0,0.12)" stroke-width="0.8"/>
<circle cx="201.18" cy="365.9" r="12.6" fill="#78909c" stroke="rgba(0,0,0,0.12)" stroke-width="0.8"/>
<circle cx="228.96" cy="365.9" r="12.6" fill="#ffab40" stroke="rgba(0,0,0,0.12)" stroke-width="0.8"/>
<circle cx="256.74" cy="365.9" r="12.6" fill="#4dd0e1" stroke="rgba(0,0,0,0.12)" stroke-width="0.8"/>
<circle cx="284.52" cy="365.9" r="12.6" fill="#eeff41" stroke="rgba(0,0,0,0.12)" stroke-width="0.8"/>
  <!-- check mark on theme circle 3 -->
  <path d="M83 366.5 L87.6 370.9 L97.2 361.3" fill="none" stroke="#fff" stroke-width="1.9"/>
  <!-- pencil in theme -->
  <g transform="translate(92.5 340.5) rotate(-45)">
    <path d="M0 0 L2.6 -2.3 L14.2 -2.3 L14.2 2.3 L2.6 2.3 Z" fill="#5f6368"/>
    <rect x="15.5" y="-2.3" width="3.7" height="4.6" fill="#5f6368"/>
  </g>
  <rect x="20.5" y="389.8" width="278.5" height="1" fill="#dadce0"/>
  <!-- plus circle -->
  <circle cx="35" cy="446.4" r="8.6" fill="none" stroke="#5f6368" stroke-width="1.8"/>
  <rect x="30.3" y="445.5" width="9.4" height="1.8" fill="#5f6368"/>
  <rect x="34.1" y="441.7" width="1.8" height="9.4" fill="#5f6368"/>
</svg>
<div class="lbl" style="left:27.5px;top:328px;line-height:16px">THEME</div>
<div class="lbl" style="left:27.3px;top:409.5px;line-height:16px;letter-spacing:0.7px">CUSTOM</div>

<!-- cursor hand -->
<svg class="abs" style="left:50px;top:72px" width="24.2" height="29.8" viewBox="0 0 26 32">
  <path d="M7.5 3.5 Q7.5 1.5 9.3 1.5 Q11 1.5 11 3.5 L11 12 Q11.5 10.8 13 10.8 Q14.6 10.8 14.7 12.5 Q15.2 11.4 16.6 11.4 Q18.2 11.5 18.3 13.3 Q18.8 12.4 20 12.4 Q21.8 12.5 21.8 14.5 L21.8 21 Q21.8 27 17.5 29.5 L10.5 29.5 Q8 27 5 22.5 L2.3 18.5 Q1.5 17 2.8 16.2 Q4.2 15.5 5.3 16.8 L7.5 19.5 Z" fill="#fff" stroke="#222" stroke-width="1.3" stroke-linejoin="round"/>
  <path d="M11 12 V18 M14.7 12.5 V18 M18.3 13.3 V18" stroke="#222" stroke-width="1"/>
</svg>

</body></html>
